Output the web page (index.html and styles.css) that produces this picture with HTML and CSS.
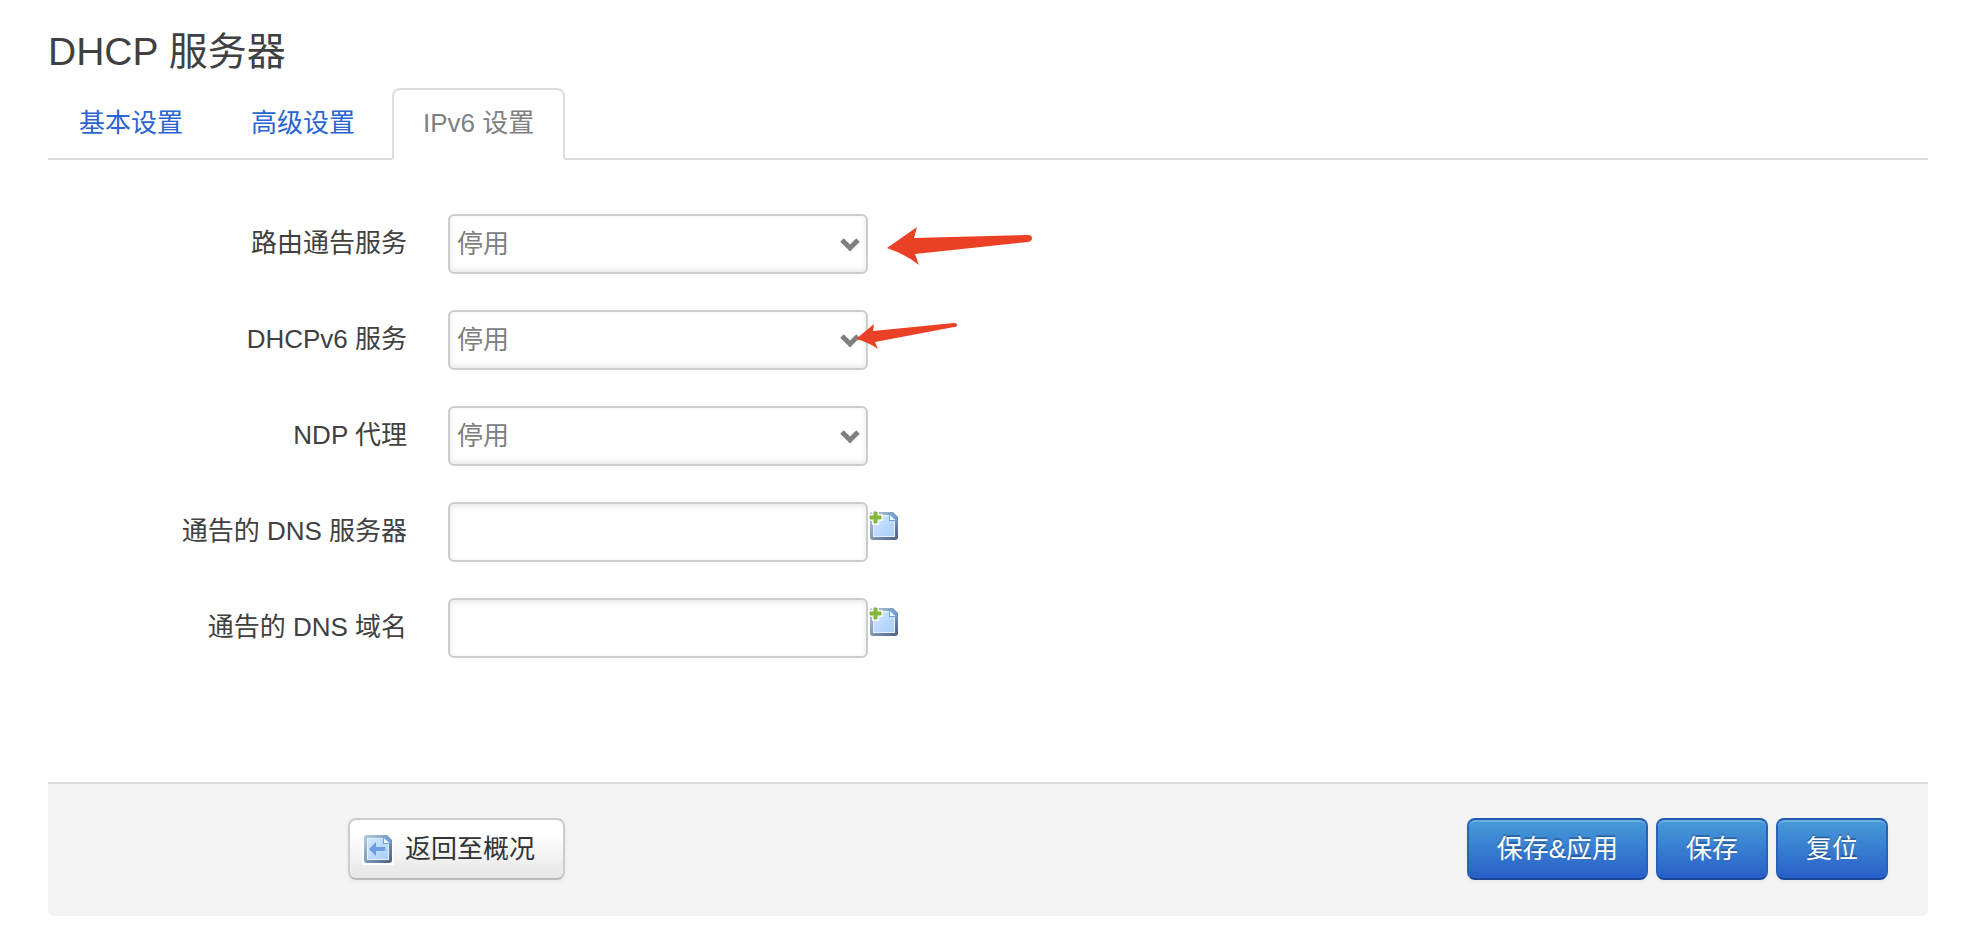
FILE: index.html
```html
<!DOCTYPE html>
<html lang="zh-CN">
<head>
<meta charset="utf-8">
<title>DHCP 服务器</title>
<link rel="stylesheet" href="styles.css">
</head>
<body>
<svg class="defs" width="0" height="0" aria-hidden="true">
  <defs>
    <linearGradient id="edge" x1="0" y1="0" x2="1" y2="1">
      <stop offset="0" stop-color="#b9cfde"/>
      <stop offset="0.5" stop-color="#7d98b8"/>
      <stop offset="1" stop-color="#4e5f80"/>
    </linearGradient>
    <linearGradient id="sheet" x1="0" y1="0" x2="1" y2="1">
      <stop offset="0" stop-color="#d3e6fd"/>
      <stop offset="1" stop-color="#a8cffc"/>
    </linearGradient>
    <symbol id="page" viewBox="0 0 32 32">
      <path d="M4 2H25L30 7V27Q30 30 27 30H5Q2 30 2 27V4Q2 2 4 2Z" fill="url(#edge)"/>
      <path d="M5 5H24L27 8V27H5Z" fill="#e4effc"/>
      <path d="M6 6H21V11H26V26H6Z" fill="url(#sheet)"/>
      <path d="M21 4H25L29 8V11H21Z" fill="#6fa3e0"/>
      <path d="M22 5V10H27Z" fill="#fff"/>
    </symbol>
    <symbol id="page-add" viewBox="0 0 32 32">
      <use href="#page"/>
      <path d="M4 0H11V4H15V11H11V15H4V11H0V4H4Z" fill="#fff" opacity="0.85"/>
      <path d="M6 2H9V6H13V9H9V13H6V9H2V6H6Z" fill="#84b738" stroke="#84b738"/>
    </symbol>
  </defs>
</svg>
<main class="page">
  <h1 class="title">DHCP 服务器</h1>
  <nav class="tabs">
    <a class="tab" href="#basic">基本设置</a>
    <a class="tab" href="#advanced">高级设置</a>
    <a class="tab active" href="#ipv6">IPv6 设置</a>
  </nav>
  <form class="form">
    <div class="fields">
      <div class="row">
        <label class="label" for="ra">路由通告服务</label>
        <div class="control">
          <select class="box" id="ra"><option>停用</option></select>
          <svg class="chevron" viewBox="0 0 20 14"><path d="M2 2L10 10L18 2"/></svg>
          <svg class="arrow arrow-large" viewBox="0 0 146 40"><path d="M0 22L30 1L27 12L141 9Q145 9 145 12Q145 15 141 16L28 28L32 39Q20 29 0 22Z"/></svg>
        </div>
      </div>
      <div class="row">
        <label class="label" for="dhcpv6">DHCPv6 服务</label>
        <div class="control">
          <select class="box" id="dhcpv6"><option>停用</option></select>
          <svg class="chevron" viewBox="0 0 20 14"><path d="M2 2L10 10L18 2"/></svg>
          <svg class="arrow arrow-small" viewBox="0 0 102 28"><path d="M0 17L18 2L17 9L98 1Q101 1 101 3Q101 5 98 5L19 20L22 27Q12 20 0 17Z"/></svg>
        </div>
      </div>
      <div class="row">
        <label class="label" for="ndp">NDP 代理</label>
        <div class="control">
          <select class="box" id="ndp"><option>停用</option></select>
          <svg class="chevron" viewBox="0 0 20 14"><path d="M2 2L10 10L18 2"/></svg>
        </div>
      </div>
      <div class="row">
        <label class="label" for="dns">通告的 DNS 服务器</label>
        <div class="control">
          <input class="box" id="dns" type="text">
          <button class="add" type="button" aria-label="添加"><svg class="icon" viewBox="0 0 32 32"><use href="#page-add"/></svg></button>
        </div>
      </div>
      <div class="row">
        <label class="label" for="domain">通告的 DNS 域名</label>
        <div class="control">
          <input class="box" id="domain" type="text">
          <button class="add" type="button" aria-label="添加"><svg class="icon" viewBox="0 0 32 32"><use href="#page-add"/></svg></button>
        </div>
      </div>
    </div>
    <div class="actions">
      <button class="btn back" type="button"><svg class="icon back-icon" viewBox="0 0 32 32"><use href="#page"/><path d="M7 16L14 9V14H23V18H14V23Z" fill="#6c9ee2"/></svg>返回至概况</button>
      <div class="group">
        <button class="btn primary" type="button">保存&amp;应用</button>
        <button class="btn primary" type="button">保存</button>
        <button class="btn primary" type="reset">复位</button>
      </div>
    </div>
  </form>
</main>
</body>
</html>
```
FILE: styles.css
```css
* { box-sizing: border-box; }
body {
  margin: 0;
  background: #fff;
  color: #404040;
  font: 26px/36px "Liberation Sans", "Noto Sans CJK SC", sans-serif;
}
.defs { position: absolute; }
.page { padding: 16px 44px 34px 48px; }
.title {
  margin: 0;
  font-size: 39px;
  font-weight: 400;
  line-height: 72px;
}
.tabs {
  display: flex;
  gap: 6px;
  border-bottom: 2px solid #ddd;
}
.tab {
  margin-bottom: -2px;
  padding: 0 29px 2px;
  border: 2px solid transparent;
  border-radius: 8px 8px 0 0;
  color: #2a66d0;
  line-height: 66px;
  text-decoration: none;
}
.tab.active {
  border-color: #ddd #ddd #fff;
  background: #fff;
  color: #808080;
}
.fields {
  display: flex;
  flex-direction: column;
  gap: 36px;
  padding: 54px 0 124px;
}
.row {
  display: flex;
  gap: 41px;
}
.label {
  width: 359px;
  line-height: 58px;
  text-align: right;
}
.control {
  position: relative;
  display: flex;
  align-items: flex-start;
}
.box {
  width: 420px;
  height: 60px;
  margin: 0;
  padding: 0 7px;
  border: 2px solid #ccc;
  border-radius: 6px;
  outline: 0;
  background: #fff;
  box-shadow: inset 0 2px 6px rgba(0, 0, 0, 0.1);
  color: #808080;
  font: inherit;
  appearance: none;
}
select.box { box-shadow: inset 0 -2px 6px rgba(0, 0, 0, 0.1); }
.chevron {
  position: absolute;
  top: 24px;
  right: 8px;
  width: 20px;
  height: 14px;
  fill: none;
  stroke: #808080;
  stroke-width: 5;
  pointer-events: none;
}
.arrow {
  position: absolute;
  fill: #ea4025;
  pointer-events: none;
}
.arrow-large {
  top: 12px;
  left: 439px;
  width: 146px;
}
.arrow-small {
  top: 12px;
  left: 408px;
  width: 102px;
}
.add {
  margin: 8px 0 0;
  padding: 0;
  border: 0;
  background: none;
}
.icon {
  display: block;
  width: 32px;
  height: 32px;
}
.actions {
  display: flex;
  justify-content: space-between;
  padding: 34px 40px 36px 300px;
  border-top: 2px solid #ddd;
  border-radius: 0 0 6px 6px;
  background: #f4f4f4;
}
.group {
  display: flex;
  gap: 8px;
}
.btn {
  display: flex;
  align-items: center;
  height: 62px;
  margin: 0;
  padding: 0 28px;
  border: 2px solid #ccc;
  border-bottom-color: #bbb;
  border-radius: 8px;
  background: linear-gradient(#fff 25%, #e6e6e6);
  box-shadow: inset 0 2px 0 rgba(255, 255, 255, 0.2), 0 2px 4px rgba(0, 0, 0, 0.05);
  color: #333;
  font: inherit;
}
.back {
  gap: 11px;
  padding-left: 12px;
}
.back-icon { background: #fff; }
.primary {
  border-color: #2259b0 #2a62b8 #1f4799;
  background: linear-gradient(#479bd8, #285fc8);
  color: #fff;
  text-shadow: 0 -2px 0 rgba(0, 0, 0, 0.25);
}
```
